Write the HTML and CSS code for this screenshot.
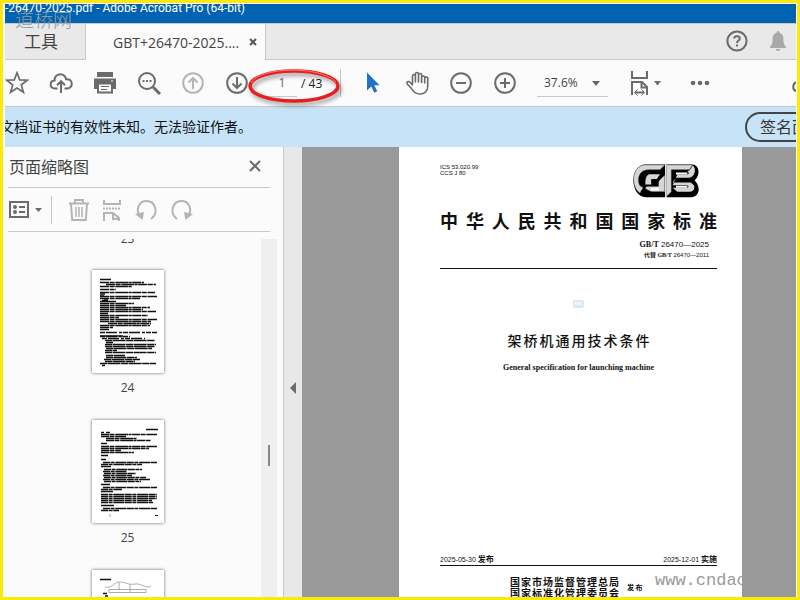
FILE: index.html
```html
<!DOCTYPE html>
<html lang="zh-CN">
<head>
<meta charset="utf-8">
<title>GBT+26470-2025.pdf - Adobe Acrobat Pro (64-bit)</title>
<link rel="stylesheet" href="styles.css">
</head>
<body>
<div class="app">
  <header class="titlebar"><span class="titlebar-text">-26470-2025.pdf - Adobe Acrobat Pro (64-bit)</span></header>
  <div class="site-mark">道桥网</div>

  <nav class="tabs">
    <button class="tab tab-tools">工具</button>
    <div class="tab tab-active">
      <span>GBT+26470-2025....</span>
      <button class="icon-btn tab-close" aria-label="关闭标签"><svg width="8" height="8" viewBox="0 0 8 8"><path d="M1 1l6 6M7 1L1 7" stroke="#555" stroke-width="2"/></svg></button>
    </div>
    <div class="tabs-rest">
      <button class="icon-btn" aria-label="帮助"><svg width="22" height="22" viewBox="0 0 22 22" fill="none" stroke="#6b6b6b" stroke-width="2"><circle cx="11" cy="11" r="9.6"/><path d="M8.2 8.6C8.2 5.4 13.8 5.4 13.8 8.6C13.8 10.6 11 10.4 11 13"/><path d="M11 14.6v2"/></svg></button>
      <button class="icon-btn" aria-label="通知"><svg width="18" height="20" viewBox="0 0 18 20" fill="#a9a9a9"><path d="M9 0q1.4 0 1.4 1.8C14 3 14.4 5.600 14.400 9c0 3.600 1 4.800 2.600 7v1H1v-1c1.600-2.200 2.600-3.400 2.600-7C3.600 5.600 4 3 7.600 1.800Q7.600 0 9 0zM6.500 18h5q-.6 2-2.500 2t-2.500-2z"/></svg></button>
    </div>
  </nav>

  <div class="toolbar">
    <button class="tool" aria-label="收藏"><svg width="24" height="24" viewBox="0 0 24 24" fill="none" stroke="#6b6b6b" stroke-width="1.700"><path d="M12 1.800l2.700 7.100 7.600.3-6 4.700 2.100 7.300L12 17l-6.400 4.200 2.100-7.300-6-4.700 7.600-.3z"/></svg></button>
    <button class="tool" aria-label="上传"><svg width="24" height="24" viewBox="0 0 24 24" fill="none" stroke="#6b6b6b" stroke-width="2"><path d="M8.500 17.500H6C.2 17.300.4 9.800 5.600 9.600 5 4.500 11.500 1.200 15.300 4.800c1.200 1.200 1.700 2.300 1.800 3.400 7.300-.7 7.500 9.100.9 9.300h-2.500M12 22V10.500M8 14.200l4-4 4 4"/></svg></button>
    <button class="tool" aria-label="打印"><svg width="24" height="24" viewBox="0 0 24 24"><path d="M4 1h16v5H4zM1 7.500h22V18h-3v-4H4v4H1z" fill="#6b6b6b"/><path d="M5 12.500h14v9H5z" fill="#fff" stroke="#6b6b6b" stroke-width="2"/><path d="M8 15.500h8M8 18.500h6" stroke="#6b6b6b"/><path d="M18 10h2" stroke="#fff"/></svg></button>
    <button class="tool" aria-label="搜索"><svg width="24" height="24" viewBox="0 0 24 24" fill="none" stroke="#6b6b6b"><circle cx="10" cy="10" r="8" stroke-width="2"/><path d="M16 16l7 7" stroke-width="3"/><path d="M5.500 10h2M9 10h2M12.500 10h2" stroke-width="2"/></svg></button>
    <button class="tool" aria-label="上一页"><svg width="24" height="24" viewBox="0 0 24 24" fill="none" stroke="#b5b5b5" stroke-width="2"><circle cx="12" cy="12" r="9.800"/><path d="M12 18V7M7.500 11.500L12 7l4.500 4.500"/></svg></button>
    <button class="tool" aria-label="下一页"><svg width="24" height="24" viewBox="0 0 24 24" fill="none" stroke="#6b6b6b" stroke-width="2"><circle cx="12" cy="12" r="9.800"/><path d="M12 6v11M7.500 12.500L12 17l4.500-4.500"/></svg></button>
    <div class="pager">
      <input class="pager-input" type="text" value="1" aria-label="页码">
      <span>/ 43</span>
      <svg class="pager-ring" width="96" height="42" viewBox="0 0 96 42" fill="none"><ellipse cx="47" cy="21" rx="44" ry="15" stroke="#e51f1f" stroke-width="3.500"/><path d="M4 18C12 2 73 0 89 17" stroke="#ff7770" stroke-width="1"/></svg>
    </div>
    <button class="tool" aria-label="选择"><svg width="24" height="24" viewBox="0 0 24 24"><path d="M6 1.500v18l4.300-4 3 6.200 3-1.500-3-5.900h5.200z" fill="#1f72c4"/></svg></button>
    <button class="tool" aria-label="手形"><svg width="24" height="24" viewBox="0 0 24 24" fill="none" stroke="#6b6b6b" stroke-width="1.600" stroke-linecap="round"><path d="M7.500 13V5c0-2 2.900-2 2.900 0v6M10.400 5V3c0-2 3.100-2 3.100 0v8M13.500 4c0-2 3.100-2 3.100 0v7.500M16.600 6.500c0-2 3.100-2 3.100 0C23.500 5 23 8 22.700 10v5c0 5-3.200 8-7.700 8-4.500 0-6.700-2-8.500-5.500L2.300 13c-1.300-2 1.200-3.300 2.700-1.800L7.500 14M19.700 6.500V12"/></svg></button>
    <button class="tool" aria-label="缩小"><svg width="24" height="24" viewBox="0 0 24 24" fill="none" stroke="#6b6b6b" stroke-width="2"><circle cx="12" cy="12" r="9.800"/><path d="M7 12h10"/></svg></button>
    <button class="tool" aria-label="放大"><svg width="24" height="24" viewBox="0 0 24 24" fill="none" stroke="#6b6b6b" stroke-width="2"><circle cx="12" cy="12" r="9.800"/><path d="M7 12h10M12 7v10"/></svg></button>
    <div class="zoom">
      <select class="zoom-select" aria-label="缩放"><option>37.6%</option></select>
      <svg class="zoom-caret" width="8" height="5" viewBox="0 0 8 5"><path d="M0 0h8L4 5z" fill="#666"/></svg>
    </div>
    <button class="tool tool-fit" aria-label="适合宽度"><svg width="32" height="26" viewBox="0 0 32 26" fill="none" stroke="#6b6b6b" stroke-width="2"><path d="M2 1v7h15V1M2 25V12h10l5 5v8M11.500 12v5.500H17M5 22.500h9"/><path d="M7.500 19.500l-3 3 3 3M11.500 19.500l3 3-3 3" stroke-width="1"/><path d="M24 11h7l-3.500 4.500z" fill="#6b6b6b" stroke="none"/></svg></button>
    <button class="tool" aria-label="更多"><svg width="24" height="24" viewBox="0 0 24 24" fill="#6b6b6b"><circle cx="5" cy="12" r="2.300"/><circle cx="12" cy="12" r="2.300"/><circle cx="19" cy="12" r="2.300"/></svg></button>
    <button class="tool tool-link" aria-label="链接"><svg width="4" height="12" viewBox="0 0 4 12" fill="none" stroke="#6b6b6b" stroke-width="2"><path d="M5 1C0 2 0 10 5 10"/></svg></button>
  </div>

  <div class="notice">
    <span class="notice-text">文档证书的有效性未知。无法验证作者。</span>
    <button class="notice-btn">签名面板</button>
  </div>

  <div class="main">
    <aside class="panel">
      <div class="panel-head">
        <h2>页面缩略图</h2>
        <button class="icon-btn" aria-label="关闭面板"><svg width="12" height="12" viewBox="0 0 12 12"><path d="M1 1l10 10M11 1L1 11" stroke="#6b6b6b" stroke-width="2"/></svg></button>
      </div>
      <div class="panel-tools">
        <button class="icon-btn options" aria-label="选项"><svg width="34" height="18" viewBox="0 0 34 18"><path d="M1 1h18v15H1z" fill="none" stroke="#6b6b6b" stroke-width="2"/><circle cx="6" cy="6" r="2" fill="#6b6b6b"/><circle cx="6" cy="11" r="2" fill="#6b6b6b"/><path d="M10 6h6M10 11h6" stroke="#6b6b6b" stroke-width="2"/><path d="M26 7h7l-3.500 4z" fill="#6b6b6b"/></svg></button>
        <button class="icon-btn" aria-label="删除"><svg width="22" height="24" viewBox="0 0 22 24" fill="none" stroke="#b4b4b4" stroke-width="2"><path d="M1 5.500h20M7 5V2h8v3M3 6l1.200 16h13.600L19 6"/><path d="M8 9v10M11 9v10M14 9v10" stroke-width="1.500"/></svg></button>
        <button class="icon-btn" aria-label="拆分"><svg width="20" height="24" viewBox="0 0 20 24" fill="none" stroke="#b4b4b4" stroke-width="2"><path d="M2 2v4h16V2M2 23v-8h9l6 5v3M11 15v6h7"/><path d="M1 10.500h18" stroke-dasharray="2 1"/></svg></button>
        <button class="icon-btn" aria-label="逆时针旋转"><svg width="24" height="24" viewBox="0 0 24 24" fill="none" stroke="#b4b4b4" stroke-width="2"><path d="M17 21C25 15 21.500 3 12.500 3 5 3 2 10.500 5 17.500"/><path d="M1 16l9-2-1.500 8z" fill="#b4b4b4" stroke="none"/></svg></button>
        <button class="icon-btn" aria-label="顺时针旋转"><svg width="24" height="24" viewBox="0 0 24 24" fill="none" stroke="#b4b4b4" stroke-width="2"><path d="M7 21C-1 15 2.500 3 11.500 3 19 3 22 10.500 19 17.500"/><path d="M23 16l-9-2 1.500 8z" fill="#b4b4b4" stroke="none"/></svg></button>
      </div>
      <div class="thumbs">
        <div class="thumb-list">
          <div class="thumb-label first">23</div>
          <button class="thumb" aria-label="第 24 页"><svg width="72" height="103" viewBox="0 0 72 103" fill="none" stroke="#111" stroke-width="1.500"><path d="M8 9.500h11M8 31.500h16M12 30h4M8 24h5M8 26h4M10 30.500h6M8 59.500h9M8 66h23"/><path stroke-dasharray="9 .6 5 .7 13 .4 3 .5" d="M8 12.500h44M14 14.500h50M8 16.500h32M8 19.500h16M8 22.500h55M8 26.500h57M8 28.500h40M8 33.500h34M8 35.500h26M8 37.500h50M8 39.500h43M8 41.500h56M8 43.500h8M8 45.500h48M8 47.500h19M8 49.500h57M8 51.500h51M16 53.500h43M8 55.500h50M8 57.500h13"/><path stroke-dasharray="5 1 11 2 3 1" d="M8 62.500h57M8 66.500h30M10 68.500h43"/><path stroke-dasharray="7 .5 13 .6" d="M13 70.500h50M14 72.500h7M13 74.500h51M13 76.500h50M14 78.500h46M13 80.500h12M13 82.500h51M14 85.500h19M14 87.500h31M12 89.500h36M13 91.500h30M8 93.500h56M10 95.500h3"/></svg></button>
          <div class="thumb-label">24</div>
          <button class="thumb" aria-label="第 25 页"><svg width="72" height="103" viewBox="0 0 72 103" fill="none" stroke="#111" stroke-width="1.500"><path d="M54 9.500h12M9 12.500h3M14 12.500h4M9 23.500h6M9 35.500h7M9 39.500h5M9 46.500h10M9 64.500h9M9 71.500h12M9 85.500h13"/><path stroke-dasharray="8 .5 5 .7 13 .4 3 .5" d="M9 14.500h56M9 16.500h25M14 18.500h31M14 20.500h45M9 26.500h56M9 28.500h48M9 30.500h20M9 32.500h33"/><path stroke-dasharray="7 .6 4 .7 11 .5" d="M11 42.500h54M9 44.500h41M12 49.500h38M11 51.500h24M12 53.500h32M11 55.500h29M12 57.500h42M11 59.500h47M12 61.500h37M11 67.500h54M9 69.500h21M9 74.500h56M9 76.500h56M9 78.500h56M9 80.500h51M9 82.500h52M11 88.500h54M9 90.500h18"/><path d="M18 94v3" stroke="#9fc8e8"/><path d="M63 95.500h3" stroke-width="1"/></svg></button>
          <div class="thumb-label">25</div>
          <button class="thumb" aria-label="第 26 页"><svg width="72" height="103" viewBox="0 0 72 103" fill="none" stroke="#999" stroke-width=".8"><path d="M8 9.500h11M11 23.500h4M13 26h3" stroke="#111" stroke-width="1.500"/><path d="M13 17c8 2 9-6 16-5s8 3 14 2 11 5 16 2M17 19.500h37v3H17zM27 12v8M38 14v8"/></svg></button>
        </div>
        <div class="scroll"><div class="scroll-thumb"></div></div>
      </div>
    </aside>
    <button class="gutter" aria-label="折叠面板"><svg width="6" height="12" viewBox="0 0 6 12"><path d="M6 0v12L0 6z" fill="#6b6b6b"/></svg></button>
    <main class="viewer">
      <article class="sheet">
        <div class="sheet-top">
          <p class="codes">ICS 53.020.99<br>CCS J 80</p>
          <svg class="gb" width="66" height="34" viewBox="21 21 198 101">
            <path d="M60 22H118V120H60C10 120 10 22 60 22z"/>
            <path fill="#d6d6d6" stroke="#333" stroke-width="1.500" d="M60 23H117L102 38H68C34 38 34 74 42 86L52 92 42 108C12 88 16 23 60 23z"/>
            <path fill="#d6d6d6" d="M70 51H102L92 66H76V82H58C58 66 60 54 70 51zM102 68l14-14v50H76L58 94l4-6h36V74z"/>
            <path fill="#fff" d="M74 92H98V100H76z"/>
            <path d="M76 66H102L92 78H76zM50 94l14 10h50v14H62C52 114 46 108 44 104z"/>
            <path d="M122 22H200C220 24 224 52 206 70 224 86 222 118 198 120H122z"/>
            <path fill="#d6d6d6" stroke="#333" stroke-width="1.500" d="M121 23H200L190 38H136V104L121 119z"/>
            <path fill="#d6d6d6" d="M200 25C212 32 208 58 190 62H150L140 76H194L204 84C208 98 200 104 188 104H154L140 92H180C190 92 190 84 180 84H140L154 52H184C190 50 190 46 184 44L192 38z"/>
            <path fill="#fff" d="M150 46H184V52H150zM150 86H184V92H150z"/>
            <path stroke="#fff" stroke-width="3" d="M119.500 22V120"/>
          </svg>
        </div>
        <h1 class="country">中华人民共和国国家标准</h1>
        <p class="std-no"><b>GB/T</b> 26470—2025</p>
        <p class="std-old"><b>代替 GB/T</b> 26470—2011</p>
        <hr>
        <div class="badge"><span>SMC</span></div>
        <h2 class="doc-title">架桥机通用技术条件</h2>
        <p class="doc-sub">General specification for launching machine</p>
        <div class="dates"><span>2025-05-30 <b>发布</b></span><span>2025-12-01 <b>实施</b></span></div>
        <hr>
        <div class="issuer">
          <div class="issuer-names"><div>国家市场监督管理总局</div><div>国家标准化管理委员会</div></div>
          <span class="issuer-act">发 布</span>
        </div>
        <div class="url-mark">www.cndaoqiao.com</div>
      </article>
    </main>
  </div>
</div>
</body>
</html>
```
FILE: styles.css
```css
* { box-sizing: border-box; }
body, h1, h2, p { margin: 0; }
body { font-family: "Open Sans", "Noto Sans CJK SC", sans-serif; font-size: 14px; color: #444; }
button, input, select { font: inherit; color: inherit; margin: 0; padding: 0; border: 0; background: none; }
svg { display: block; flex: none; }

.app {
  position: relative;
  display: flex;
  flex-direction: column;
  height: 100vh;
  overflow: hidden;
  border: 3px solid #fbe80c;
  padding: 1px 1px 0 2px;
  background: #fff;
}

.titlebar { flex: none; height: 19px; background: #0063b1; color: #fff; font-family: Roboto, sans-serif; font-size: 12px; overflow: hidden; white-space: nowrap; }
.titlebar-text { display: block; line-height: 9px; }
.site-mark { position: absolute; left: 12px; top: 5px; font-size: 19px; font-weight: 300; line-height: 24px; color: #8f9aa3; }

.tabs { flex: none; display: flex; height: 37px; background: #e9e9e9; border-top: 1px solid #c8c8c8; }
.tab { display: flex; align-items: center; border-right: 1px solid #c8c8c8; }
.tab-tools { width: 81px; justify-content: center; font-size: 17px; padding: 0 8px 2px 0; border-bottom: 1px solid #c8c8c8; }
.tab-active { width: 180px; padding-left: 27px; gap: 10px; background: #fbfbfb; }
.tabs-rest { flex: 1; display: flex; align-items: center; justify-content: flex-end; gap: 21px; padding: 0 9px 2px 0; border-bottom: 1px solid #c8c8c8; }
.icon-btn { display: flex; align-items: center; justify-content: center; }

.toolbar { flex: none; display: flex; align-items: center; height: 47px; background: #fbfbfb; border-bottom: 1px solid #c8c8c8; }
.tool { flex: none; display: flex; align-items: center; justify-content: center; width: 44px; height: 44px; }
.tool:first-child { width: 34px; padding-right: 10px; }
.pager { position: relative; display: flex; align-items: center; gap: 4px; width: 82px; height: 28px; margin-right: 10px; padding-left: 8px; border-right: 1px solid #c8c8c8; font-size: 12px; color: #222; }
.pager-input { width: 30px; height: 28px; text-align: center; border-bottom: 1px solid #c8c8c8; color: #666; }
.pager-ring { position: absolute; left: -12px; top: -4px; filter: drop-shadow(2px 3px 2px #0006); }
.zoom { position: relative; width: 71px; height: 28px; margin: 0 10px; border-bottom: 1px solid #c8c8c8; }
.zoom-select { appearance: none; width: 100%; height: 27px; padding-left: 7px; font-size: 12px; }
.zoom-caret { position: absolute; right: 8px; top: 12px; pointer-events: none; }
.tool-fit { width: 60px; padding-right: 4px; }
.tool-link { width: 4px; margin-left: auto; padding-top: 8px; }

.notice { flex: none; display: flex; align-items: center; justify-content: space-between; height: 40px; background: #c7e3f8; color: #111; overflow: hidden; white-space: nowrap; }
.notice-text { margin-left: -5px; padding-bottom: 2px; }
.notice-btn { flex: none; height: 30px; padding: 0 13px; margin-right: -43px; border: 2px solid #444; border-radius: 15px; font-size: 16px; line-height: 24px; color: #333; }

.main { flex: 1; min-height: 0; display: flex; }
.panel { flex: none; display: flex; flex-direction: column; width: 279px; padding-left: 3px; background: #fbfbfb; border-right: 1px solid #c8c8c8; }
.panel-head { display: flex; align-items: center; justify-content: space-between; height: 41px; margin-right: 13px; padding: 0 9px 3px 1px; border-bottom: 1px solid #c8c8c8; }
.panel-head h2 { font-size: 16px; font-weight: 400; }
.panel-tools { display: flex; align-items: center; gap: 12px; height: 44px; margin-right: 13px; padding-left: 1px; border-bottom: 1px solid #c8c8c8; }
.options { height: 28px; padding-right: 8px; margin-right: 4px; border-right: 1px solid #c8c8c8; }
.thumbs { flex: 1; min-height: 0; display: flex; margin-top: 7px; }
.thumb-list { flex: 1; display: flex; flex-direction: column; align-items: center; padding-right: 14px; overflow: hidden; }
.thumb-label { flex: none; height: 47px; padding-top: 5px; font-size: 12px; line-height: 20px; }
.thumb-label.first { height: 31px; padding: 0; line-height: 0; }
.thumb { flex: none; background: #fff; box-shadow: 0 0 3px #0009; }
.scroll { width: 16px; margin-right: 6px; background: #efefef; }
.scroll-thumb { width: 2px; height: 21px; margin: 206px 0 0 7px; background: #888; }
.gutter { flex: none; display: flex; align-items: center; justify-content: center; width: 18px; padding-top: 32px; background: #e8e8e8; }

.viewer { flex: 1; display: grid; grid-template-columns: 97fr 343px 54fr; background: #999; overflow: hidden; }
.sheet { position: relative; grid-column: 2; display: flex; flex-direction: column; min-height: 485px; padding: 17px 25px 0 41px; background: #fff; color: #111; overflow: hidden; }
.sheet hr { width: 100%; margin: 0; border: 0; border-top: 1px solid #111; }
.sheet-top { display: flex; justify-content: space-between; padding-right: 18px; }
.codes { font: 6px/6px "Liberation Sans", sans-serif; }
.country { margin-top: 8px; font: 700 18px/28px "Noto Sans CJK SC", sans-serif; text-align-last: justify; }
.std-no { margin-top: 5px; padding-right: 8px; font: 8px/11px "Liberation Sans", "Noto Sans CJK SC", sans-serif; text-align: right; }
.std-no b, .std-old b { font-family: "Liberation Serif", "Noto Sans CJK SC", serif; }
.std-old { padding-right: 8px; margin-bottom: 7px; font: 6px/11px "Liberation Sans", "Noto Sans CJK SC", sans-serif; text-align: right; }
.badge { align-self: center; margin-top: 31px; padding: 0 1px; border-radius: 2px; background: #d9e8f5; color: #fff; font: 700 4px/8px "Liberation Sans", sans-serif; }
.doc-title { width: 142px; align-self: center; margin-top: 22px; font: 500 14px/20px "Noto Sans CJK SC", sans-serif; text-align-last: justify; }
.doc-sub { margin-top: 12px; font: 700 8px/12px "Liberation Serif", serif; text-align: center; }
.dates { display: flex; justify-content: space-between; margin-top: 180px; font: 7px/11px "Liberation Sans", "Noto Sans CJK SC", sans-serif; }
.dates b { font-size: 8px; }
.issuer { display: flex; align-items: center; gap: 8px; margin-top: 10px; padding-left: 70px; font: 700 10px/11px "Noto Sans CJK SC", sans-serif; }
.issuer-names { width: 109px; text-align-last: justify; }
.issuer-act { font-size: 7px; }
.url-mark { position: absolute; left: 256px; top: 424px; font: 17px/20px "Liberation Mono", monospace; color: #999; }
```
